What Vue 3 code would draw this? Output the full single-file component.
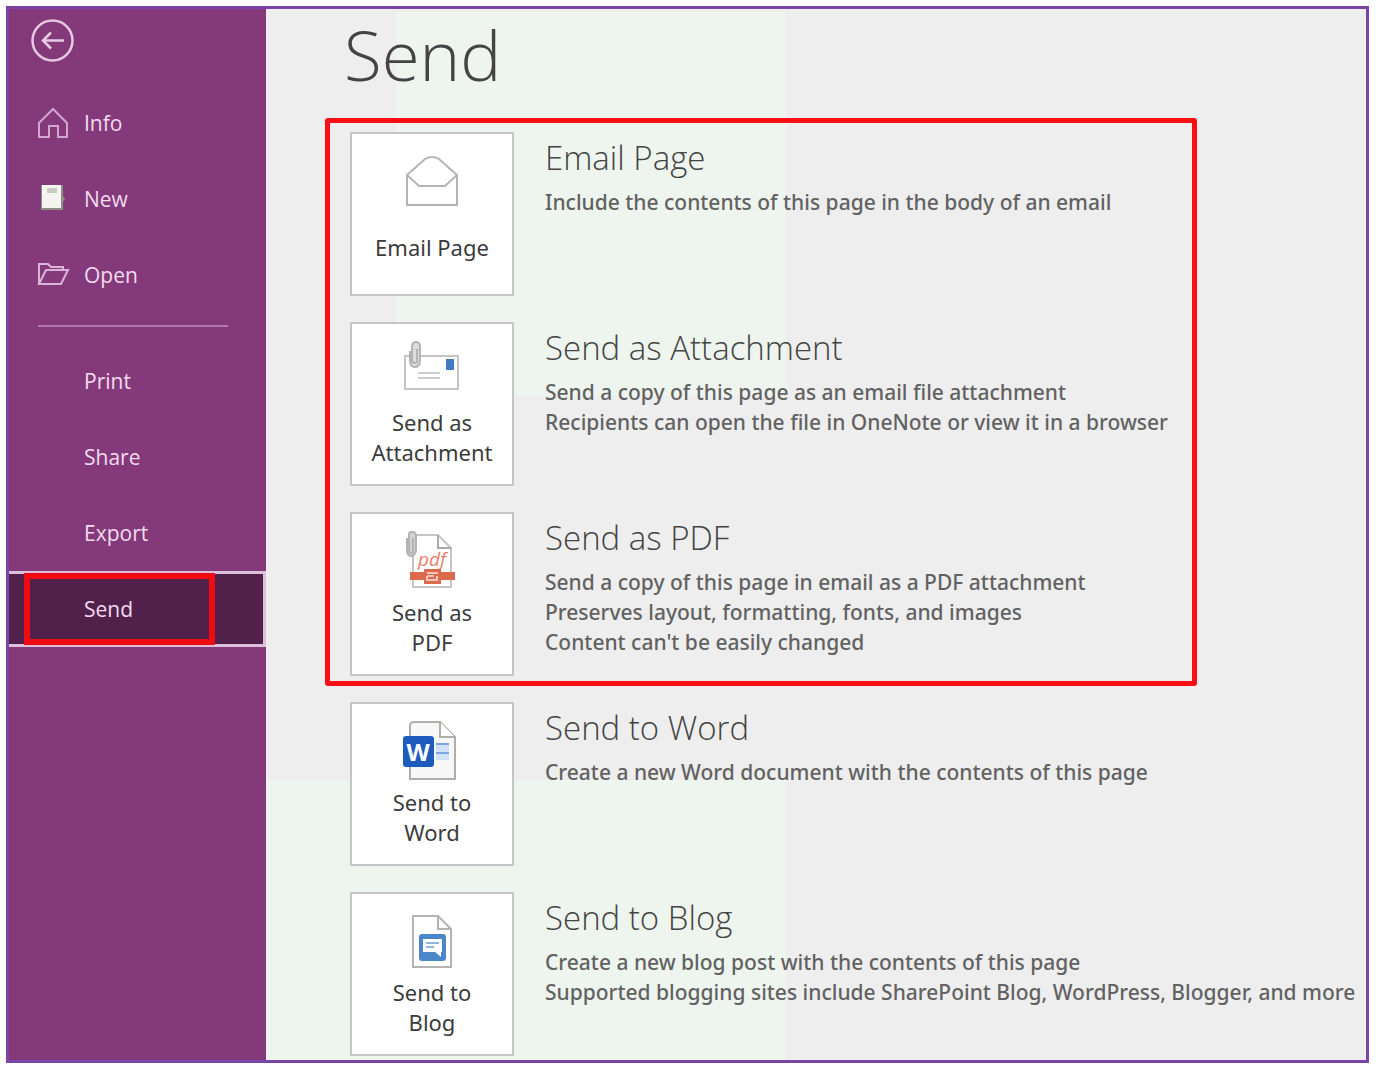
<script setup>
const navTop = [
  { label: 'Info', icon: 'home' },
  { label: 'New', icon: 'page' },
  { label: 'Open', icon: 'folder' },
]
const navBottom = [{ label: 'Print' }, { label: 'Share' }, { label: 'Export' }, { label: 'Send', active: true }]

const groups = [
  {
    marked: true,
    items: [
      { icon: 'email', tile: ['Email Page'], title: 'Email Page', lines: ['Include the contents of this page in the body of an email'] },
      {
        icon: 'attachment',
        tile: ['Send as', 'Attachment'],
        title: 'Send as Attachment',
        lines: ['Send a copy of this page as an email file attachment', 'Recipients can open the file in OneNote or view it in a browser'],
      },
      {
        icon: 'pdf',
        tile: ['Send as', 'PDF'],
        title: 'Send as PDF',
        lines: ['Send a copy of this page in email as a PDF attachment', 'Preserves layout, formatting, fonts, and images', "Content can't be easily changed"],
      },
    ],
  },
  {
    marked: false,
    items: [
      { icon: 'word', tile: ['Send to', 'Word'], title: 'Send to Word', lines: ['Create a new Word document with the contents of this page'] },
      {
        icon: 'blog',
        tile: ['Send to', 'Blog'],
        title: 'Send to Blog',
        lines: ['Create a new blog post with the contents of this page', 'Supported blogging sites include SharePoint Blog, WordPress, Blogger, and more'],
      },
    ],
  },
]
</script>

<template>
  <div class="window">
    <nav class="sidebar" aria-label="File">
      <button class="back" type="button" aria-label="Back">
        <svg width="46" height="46" viewBox="0 0 46 46" fill="none" stroke="#e6c8e3">
          <circle cx="22.5" cy="22.5" r="20" stroke-width="2.5" />
          <path d="M34 22.5H14M21 14.5L13 22.5L21 30.5" stroke-width="2.5" />
        </svg>
      </button>

      <a v-for="item in navTop" :key="item.label" class="item" href="#">
        <svg v-if="item.icon === 'home'" class="glyph" viewBox="0 0 34 34" fill="none" stroke="#d3a5cf" stroke-width="2">
          <path d="M3 17L17 3L31 17V31H22V20H13V31H3Z" />
        </svg>
        <svg v-else-if="item.icon === 'page'" class="glyph" viewBox="0 0 34 34">
          <rect x="5" y="3" width="22" height="25" fill="#8b8e84" />
          <rect x="6" y="3" width="19" height="23" fill="#f3f5ee" />
          <rect x="11" y="6" width="10" height="5" fill="#c9ccc4" />
          <path d="M27 14l2 3l-2 3z" fill="#8b9a73" />
        </svg>
        <svg v-else class="glyph" viewBox="0 0 34 34" fill="none" stroke="#dcb4d9" stroke-width="2">
          <path d="M3 26V6H12L15 9H27V12M3 26L10 12H32L25 26Z" />
        </svg>
        <span>{{ item.label }}</span>
      </a>

      <hr class="rule" />

      <a v-for="item in navBottom" :key="item.label" class="item" :class="{ active: item.active }" href="#">
        <span class="indent">{{ item.label }}</span>
      </a>
    </nav>

    <main class="content">
      <h1>Send</h1>
      <section v-for="(group, g) in groups" :key="g" class="group" :class="{ marked: group.marked }">
        <article v-for="item in group.items" :key="item.title" class="row">
          <button class="tile" type="button">
            <svg v-if="item.icon === 'email'" class="art" viewBox="0 0 60 64" fill="none" stroke="#b4b4b4" stroke-width="2">
              <path d="M5 27V57H55V27M5 27L23 11Q30 7 37 11L55 27L43 38H17Z" />
            </svg>
            <svg v-else-if="item.icon === 'attachment'" class="art" viewBox="0 0 60 64" fill="none">
              <rect x="3" y="18" width="53" height="33" stroke="#c4c4c4" stroke-width="2" />
              <path d="M16 35H38M16 40H38" stroke="#cfcfcf" stroke-width="2" />
              <rect x="44" y="21" width="8" height="11" fill="#3f7cc4" />
              <path d="M8 13V22Q8 29 13 29T18 22V9Q18 4 14 4T10 9V22Q10 25 13 25T15 22V11" fill="#dddddd" stroke="#b3b3b3" stroke-width="2" />
            </svg>
            <svg v-else-if="item.icon === 'pdf'" class="art" viewBox="0 0 60 64" fill="none">
              <path d="M11 59V7H36L49 20V59Z" fill="#ffffff" stroke="#c6c6c6" stroke-width="2" />
              <path d="M36 7V20H49" stroke="#ababab" stroke-width="2" />
              <path d="M5 10V22Q5 28 9 28T14 22V8Q14 4 10 4T7 8V22Q7 25 9 25T11 22V10" fill="#d4d4d4" stroke="#b3b3b3" stroke-width="2" />
              <text x="16" y="38" fill="#e8806a" font-family="Open Sans, sans-serif" font-size="19" font-style="italic">pdf</text>
              <path d="M8 44H53V52H8Z" fill="#dc6a4e" />
              <rect x="22" y="41" width="17" height="15" fill="#dc6a4e" />
              <path d="M25 45H36M25 48H32M35 48V52H25V48" stroke="#f7c6b8" stroke-width="2" />
            </svg>
            <svg v-else-if="item.icon === 'word'" class="art" viewBox="0 0 60 64" fill="none">
              <path d="M8 61V8Q8 4 12 4H38L53 19V61Z" fill="#f7f7f7" stroke="#b1ada9" stroke-width="2" />
              <path d="M38 4V19H53" fill="#ffffff" stroke="#b1ada9" stroke-width="2" />
              <rect x="34" y="25" width="13" height="17" fill="#cfe2fa" />
              <path d="M34 26H47M34 35H47" stroke="#7aa7e4" stroke-width="2" />
              <rect x="1" y="18" width="31" height="31" rx="3" fill="#1d5cbc" />
              <text x="16" y="43" fill="#ffffff" font-family="Open Sans, sans-serif" font-size="24" font-weight="700" text-anchor="middle">W</text>
            </svg>
            <svg v-else class="art" viewBox="0 0 60 64" fill="none">
              <path d="M11 59V8H36L49 21V59Z" fill="#ffffff" stroke="#b4b4b4" stroke-width="2" />
              <path d="M36 8V21H49" stroke="#b4b4b4" stroke-width="2" />
              <rect x="17" y="26" width="27" height="27" rx="3" fill="#4a86c8" />
              <path d="M21 31H40V44H39V49L33 44H21Z" fill="#ffffff" />
              <path d="M24 35H37M24 39H32" stroke="#8db5e0" stroke-width="2" />
            </svg>
            <span class="caption">
              <span v-for="part in item.tile" :key="part">{{ part }}</span>
            </span>
          </button>
          <div class="text">
            <h2>{{ item.title }}</h2>
            <p v-for="line in item.lines" :key="line">{{ line }}</p>
          </div>
        </article>
      </section>
    </main>
  </div>
</template>

<style>
body {
  background: #ffffff;
}
</style>

<style scoped>
.window {
  box-sizing: border-box;
  display: flex;
  margin: 6px 7px 6px 6px;
  border: 3px solid #7a45a5;
  background: #eeeeee;
  font-family: 'Noto Sans', 'Open Sans', sans-serif;
}

.sidebar {
  box-sizing: border-box;
  flex: 0 0 257px;
  padding-top: 9px;
  background: #843a7a;
}

.back {
  display: block;
  width: 46px;
  height: 46px;
  margin: 0 0 21px 21px;
  padding: 0;
  border: 0;
  background: none;
}

.item {
  box-sizing: border-box;
  display: flex;
  align-items: center;
  gap: 14px;
  height: 76px;
  padding-left: 27px;
  color: #f0dcee;
  font-family: 'Open Sans', 'Noto Sans', sans-serif;
  font-size: 21px;
  text-decoration: none;
}

.glyph {
  width: 34px;
  height: 34px;
}

.rule {
  height: 2px;
  margin: 12px 38px 16px 29px;
  border: 0;
  background: #b07aab;
}

.indent {
  padding-left: 48px;
}

.active {
  position: relative;
  border: 3px solid #dcc0da;
  border-left: 0;
  background: #51214b;
}

.active::after {
  position: absolute;
  inset: -1px 48px -1px 15px;
  border: 6px solid #ee0c12;
  content: '';
}

.content {
  flex: 1;
  min-width: 0;
  padding-bottom: 4px;
  background:
    linear-gradient(#eef5ee, #eef5ee) 130px 3px / 390px 384px no-repeat,
    linear-gradient(#eef5ee, #eef5ee) 0 771px / 520px 300px no-repeat,
    #eeeeee;
}

h1 {
  margin: 0 0 19px 78px;
  color: #444444;
  font-family: 'Open Sans', 'Noto Sans', sans-serif;
  font-size: 69px;
  font-weight: 300;
  line-height: 90px;
}

.group {
  box-sizing: border-box;
  display: flex;
  flex-direction: column;
  gap: 26px;
  margin: 16px 0 0 59px;
  padding-left: 25px;
}

.marked {
  max-width: 872px;
  margin-top: 0;
  padding: 9px 0 5px 20px;
  border: 5px solid #fb0f14;
  border-radius: 3px;
}

.row {
  display: flex;
  gap: 31px;
}

.tile {
  box-sizing: border-box;
  display: flex;
  flex: none;
  flex-direction: column;
  align-items: center;
  gap: 5px;
  width: 164px;
  height: 164px;
  padding: 14px 0 0;
  border: 2px solid #c6c6c6;
  background: #ffffff;
  color: #3c3c3c;
  font-family: inherit;
  font-size: 22px;
  line-height: 30px;
}

.art {
  width: 60px;
  height: 64px;
}

.caption {
  display: flex;
  flex-direction: column;
  justify-content: center;
  min-height: 60px;
}

.text {
  padding-top: 6px;
  color: #626262;
  white-space: nowrap;
}

h2 {
  margin: 0 0 9px;
  color: #444444;
  font-family: 'Open Sans', 'Noto Sans', sans-serif;
  font-size: 33px;
  font-weight: 300;
  line-height: 40px;
}

p {
  margin: 0;
  font-size: 21px;
  font-weight: 500;
  line-height: 30px;
}
</style>
